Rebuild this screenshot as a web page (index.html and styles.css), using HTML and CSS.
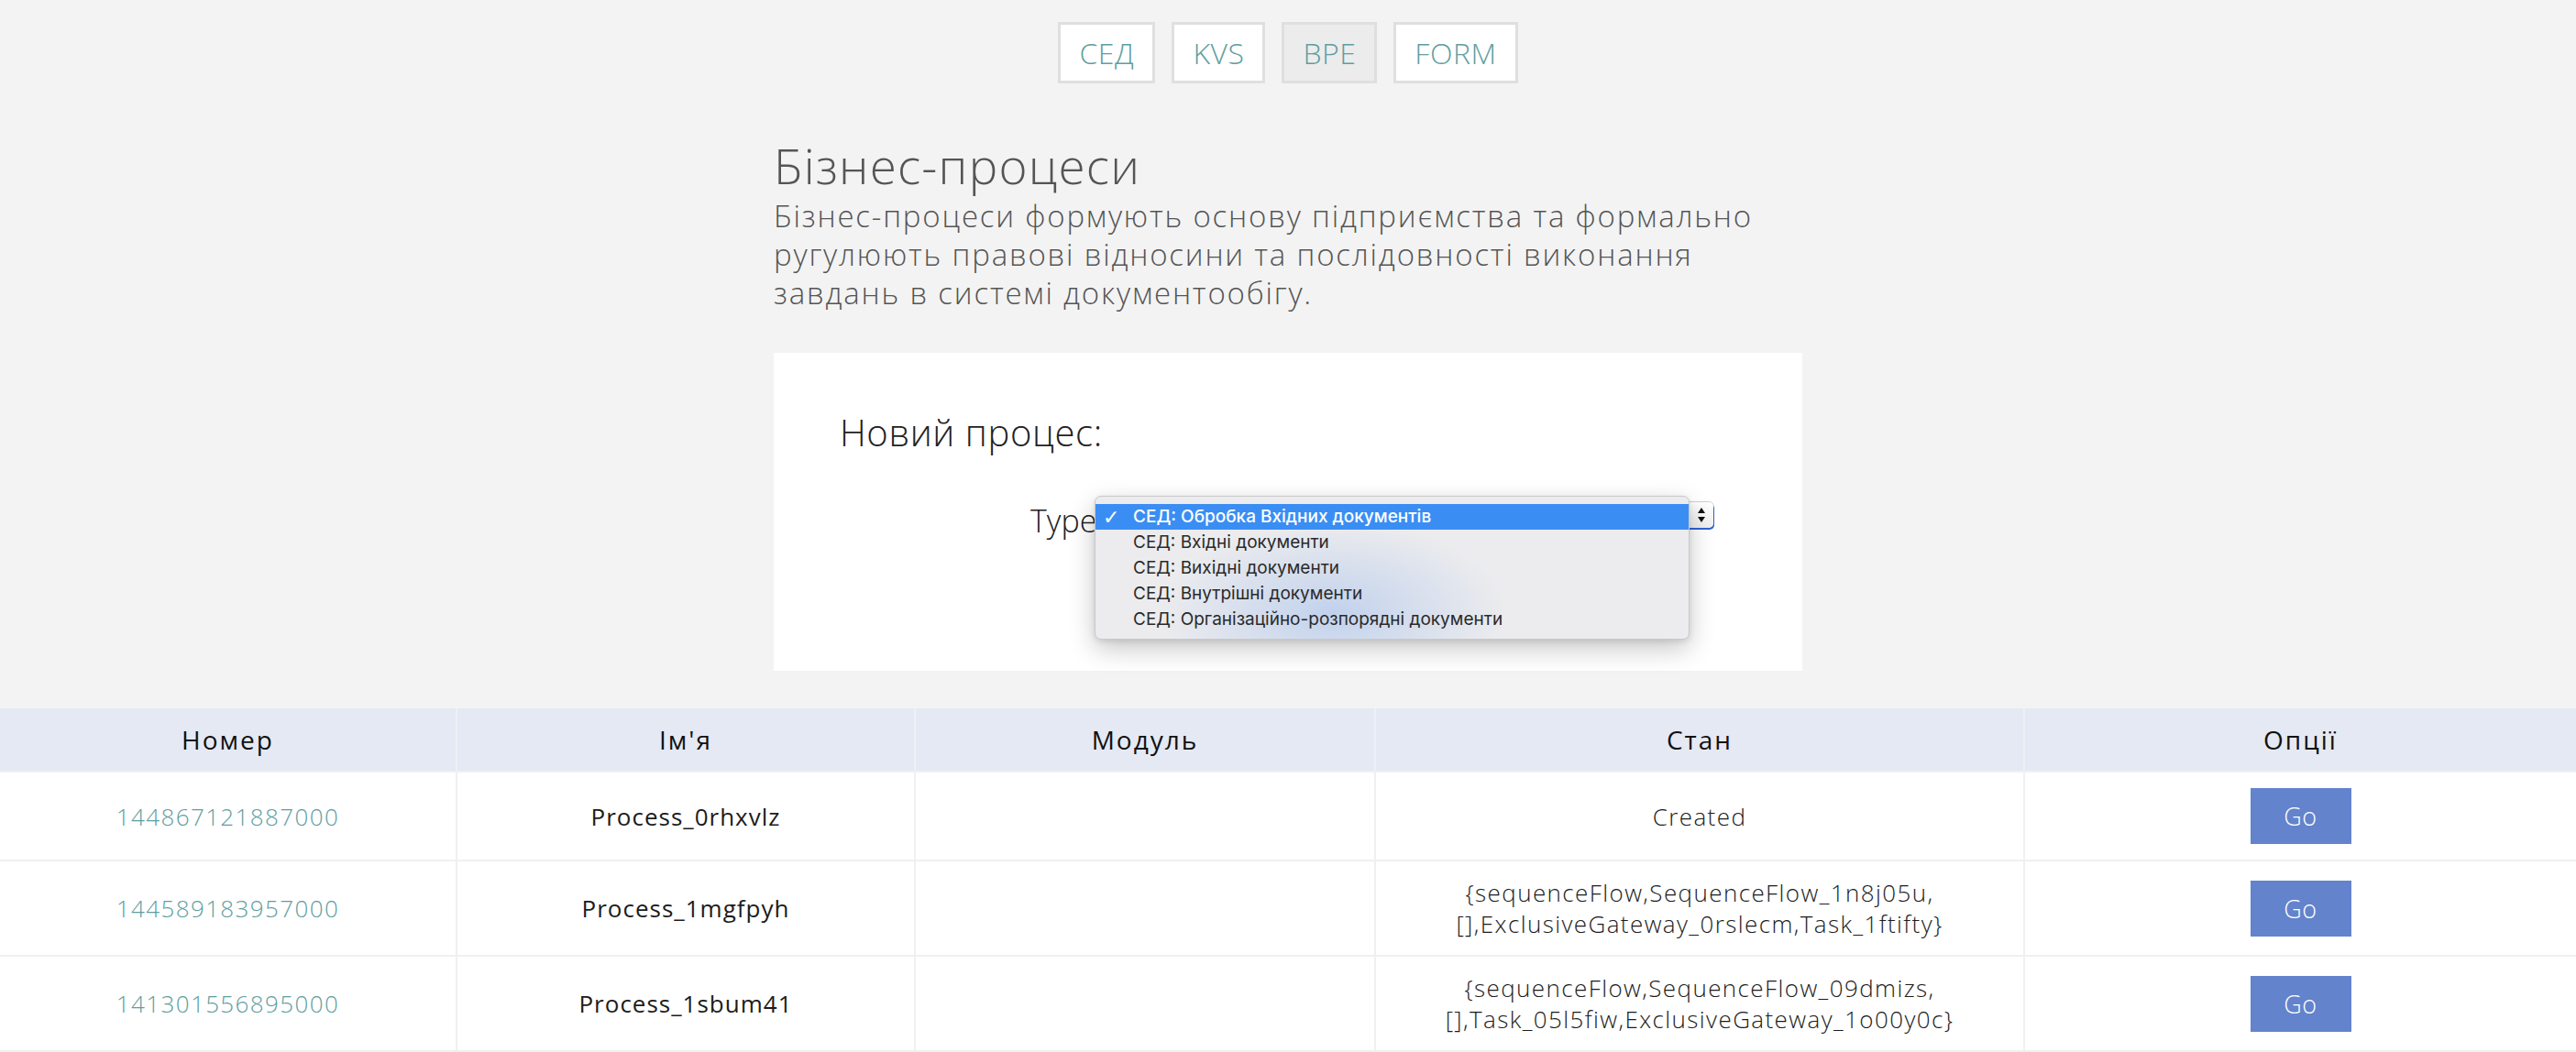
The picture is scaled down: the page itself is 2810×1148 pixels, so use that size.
FILE: index.html
```html
<!DOCTYPE html>
<html lang="uk">
<head>
<meta charset="utf-8">
<title>Бізнес-процеси</title>
<link rel="stylesheet" href="styles.css">
</head>
<body>
<nav class="tabs">
  <a class="tab" href="#">СЕД</a>
  <a class="tab" href="#">KVS</a>
  <a class="tab tab-active" href="#">BPE</a>
  <a class="tab" href="#">FORM</a>
</nav>
<main class="container">
  <h1 class="title">Бізнес-процеси</h1>
  <p class="lead">Бізнес-процеси формують основу підприємства та формально ругулюють правові відносини та послідовності виконання завдань в системі документообігу.</p>
  <section class="card">
    <h2 class="card-title">Новий процес:</h2>
    <div class="type-row">
      <label class="type-label">Type</label>
      <div class="select">
        <span class="select-arrows">
          <svg width="10" height="18" viewBox="0 0 10 18"><path d="M5 1 L9 7 L1 7 Z M5 17 L9 11 L1 11 Z" fill="#111"/></svg>
        </span>
        <ul class="popup">
          <li class="opt opt-selected"><span class="check">✓</span>СЕД: Обробка Вхідних документів</li>
          <li class="opt">СЕД: Вхідні документи</li>
          <li class="opt">СЕД: Вихідні документи</li>
          <li class="opt">СЕД: Внутрішні документи</li>
          <li class="opt">СЕД: Організаційно-розпорядні документи</li>
        </ul>
      </div>
    </div>
  </section>
</main>
<table class="grid">
  <colgroup>
    <col class="c1"><col class="c2"><col class="c3"><col class="c4"><col class="c5">
  </colgroup>
  <thead>
    <tr><th>Номер</th><th>Ім'я</th><th>Модуль</th><th>Стан</th><th>Опції</th></tr>
  </thead>
  <tbody>
    <tr>
      <td><a class="num" href="#">144867121887000</a></td>
      <td class="name">Process_0rhxvlz</td>
      <td></td>
      <td>Created</td>
      <td><button class="go">Go</button></td>
    </tr>
    <tr>
      <td><a class="num" href="#">144589183957000</a></td>
      <td class="name">Process_1mgfpyh</td>
      <td></td>
      <td>{sequenceFlow,SequenceFlow_1n8j05u,<br>[],ExclusiveGateway_0rslecm,Task_1ftifty}</td>
      <td><button class="go">Go</button></td>
    </tr>
    <tr>
      <td><a class="num" href="#">141301556895000</a></td>
      <td class="name">Process_1sbum41</td>
      <td></td>
      <td>{sequenceFlow,SequenceFlow_09dmizs,<br>[],Task_05l5fiw,ExclusiveGateway_1o00y0c}</td>
      <td><button class="go">Go</button></td>
    </tr>
  </tbody>
</table>
</body>
</html>
```
FILE: styles.css
```css
* { box-sizing: border-box; }
html, body { margin: 0; padding: 0; }
body {
  background: #f3f3f3;
  font-family: "Open Sans", "Noto Sans", sans-serif;
  font-weight: 300;
  color: #222;
  height: 1148px;
  overflow: hidden;
}
.tabs {
  display: flex;
  justify-content: center;
  gap: 18px;
  padding-top: 24px;
}
.tab {
  display: flex;
  align-items: center;
  justify-content: center;
  height: 67px;
  padding: 0 20px;
  border: 3px solid #dfdfdf;
  background: #fff;
  color: #5f9ea0;
  font-size: 32px;
  font-weight: 300;
  letter-spacing: 0.5px;
  text-decoration: none;
}
.tab-active { background: #ececec; }
.container {
  width: 1122px;
  margin: 0 auto;
}
.title {
  margin: 60px 0 0;
  font-size: 53px;
  line-height: 60px;
  font-weight: 300;
  letter-spacing: 1.2px;
  color: #555;
}
.lead {
  margin: 4px 0 0;
  font-size: 33px;
  line-height: 42px;
  letter-spacing: 1.8px;
  color: #555;
}
.card {
  margin-top: 44px;
  background: #fff;
  padding: 63px 72px 144px;
}
.card-title {
  margin: 0;
  font-size: 40px;
  line-height: 48px;
  font-weight: 300;
  letter-spacing: 0.6px;
  color: #222;
}
.type-row {
  display: flex;
  align-items: flex-start;
  margin: 52px 0 0 208px;
}
.type-label {
  width: 76px;
  font-size: 34px;
  line-height: 40px;
  color: #222;
}
.select {
  position: relative;
  width: 669px;
  height: 28px;
  border-radius: 5px;
  background: linear-gradient(#ffffff, #eeeeee);
  box-shadow: 1px 2px 0 #2f62d3, 0 0 0 1px #cfcfcf;
}
.select-arrows {
  position: absolute;
  right: 8px;
  top: 5px;
  display: flex;
}
.popup {
  position: absolute;
  left: -6px;
  top: -7px;
  width: 649px;
  height: 157px;
  margin: 0;
  padding: 8px 0 0;
  list-style: none;
  border-radius: 7px;
  border: 1px solid #c9c9cc;
  background:
    radial-gradient(ellipse 190px 100px at 40% 82%, rgba(165,192,236,0.6), rgba(165,192,236,0) 100%),
    #ececee;
  box-shadow: 0 10px 28px rgba(0,0,0,0.22), 0 2px 6px rgba(0,0,0,0.1);
  font-family: "Inter", "Noto Sans", sans-serif;
  font-weight: 400;
  font-size: 19px;
  color: #2a2a2a;
}
.opt {
  position: relative;
  height: 28px;
  line-height: 28px;
  padding-left: 41px;
  white-space: nowrap;
}
.opt-selected {
  background: #3a8ef3;
  color: #fff;
  font-weight: 500;
}
.check {
  position: absolute;
  left: 8px;
  top: 1px;
  font-size: 22px;
  font-family: "DejaVu Sans", sans-serif;
}
.grid {
  margin-top: 41px;
  width: 100%;
  border-collapse: collapse;
  table-layout: fixed;
  font-size: 26px;
  letter-spacing: 1.4px;
}
.c1 { width: 498px; }
.c2 { width: 500px; }
.c3 { width: 502px; }
.c4 { width: 708px; }
.c5 { width: 602px; }
.grid th {
  height: 69px;
  background: #e5e9f4;
  font-weight: 400;
  font-size: 28px;
  letter-spacing: 2px;
  color: #111;
  border-right: 2px solid #eef0f6;
  text-align: center;
}
.grid th:last-child { border-right: 0; }
.grid td {
  background: #fff;
  text-align: center;
  vertical-align: middle;
  padding: 17px 10px;
  line-height: 34px;
  border-top: 2px solid #f0f0f0;
  border-right: 2px solid #f0f0f0;
  color: #1c1c1c;
}
.grid td:last-child { border-right: 0; }
.grid tbody tr:last-child td { border-bottom: 3px solid #f0f0f0; }
.grid td.name { font-weight: 400; letter-spacing: 1px; }
.num {
  color: #5f9ea0;
  text-decoration: none;
}
.go {
  width: 110px;
  height: 61px;
  border: 0;
  background: #6383cc;
  color: #fff;
  font-family: inherit;
  font-size: 27px;
  font-weight: 300;
  letter-spacing: 0.5px;
  vertical-align: middle;
}
```
